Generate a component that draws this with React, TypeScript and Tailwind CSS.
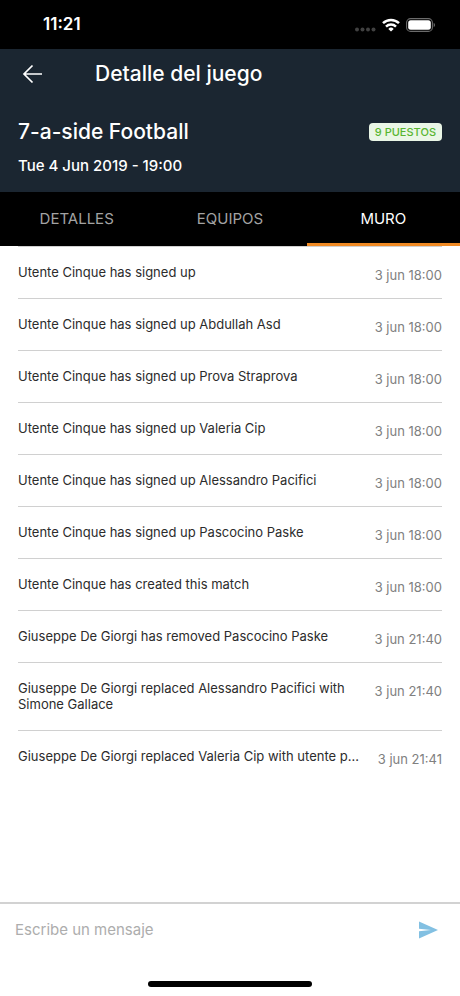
import { useState } from "react";

const TABS = ["DETALLES", "EQUIPOS", "MURO"] as const;

type Tab = (typeof TABS)[number];

const ENTRIES = [
  { text: "Utente Cinque has signed up", date: "3 jun 18:00" },
  { text: "Utente Cinque has signed up Abdullah Asd", date: "3 jun 18:00" },
  { text: "Utente Cinque has signed up Prova Straprova", date: "3 jun 18:00" },
  { text: "Utente Cinque has signed up Valeria Cip", date: "3 jun 18:00" },
  { text: "Utente Cinque has signed up Alessandro Pacifici", date: "3 jun 18:00" },
  { text: "Utente Cinque has signed up Pascocino Paske", date: "3 jun 18:00" },
  { text: "Utente Cinque has created this match", date: "3 jun 18:00" },
  { text: "Giuseppe De Giorgi has removed Pascocino Paske", date: "3 jun 21:40" },
  {
    text: "Giuseppe De Giorgi replaced Alessandro Pacifici with Simone Gallace",
    date: "3 jun 21:40",
  },
  {
    text: "Giuseppe De Giorgi replaced Valeria Cip with utente p...",
    date: "3 jun 21:41",
  },
];

export default function App() {
  const [tab, setTab] = useState<Tab>("MURO");
  const [message, setMessage] = useState("");

  return (
    <div className="flex min-h-screen flex-col bg-white font-['Inter',sans-serif]">
      <StatusBar />

      <header className="bg-[#1b2631] text-white">
        <div className="flex h-[50px] items-center px-5">
          <button aria-label="Volver" className="w-[75px]">
            <svg width="24" height="24" viewBox="0 0 24 24" fill="none" stroke="currentColor" strokeWidth="1.7">
              <path d="M22 12H4M12.5 3.5L4 12l8.500 8.500" />
            </svg>
          </button>
          <h1 className="text-[21px] leading-7 font-medium">Detalle del juego</h1>
        </div>

        <div className="px-[18px] pt-[19px] pb-[14px]">
          <div className="flex items-center justify-between">
            <h2 className="text-[21px] leading-7 font-medium">7-a-side Football</h2>
            <span className="rounded bg-[#eaf6e6] px-1.5 text-[11px] leading-[18px] font-medium text-[#58b530]">
              9 PUESTOS
            </span>
          </div>
          <p className="mt-2 text-[15px] leading-6 font-medium">Tue 4 Jun 2019 - 19:00</p>
        </div>
      </header>

      <nav className="grid grid-cols-3 bg-black">
        {TABS.map((name) => (
          <TabButton key={name} label={name} active={name === tab} onClick={() => setTab(name)} />
        ))}
      </nav>

      <main className="flex-1 px-[18px]">
        <ul className="divide-y divide-[#d0d0d0] border-t border-[#d0d0d0]">
          {ENTRIES.map((entry) => (
            <li key={entry.text} className="flex items-start gap-2 pt-[17px] pb-[18px]">
              <p className="min-w-0 flex-1 text-[13px] leading-4 text-[#2c2c2c]">{entry.text}</p>
              <time className="mt-[3px] h-[13px] shrink-0 text-[13px] leading-4 text-[#808080]">
                {entry.date}
              </time>
            </li>
          ))}
        </ul>
      </main>

      <footer className="border-t-2 border-[#d2d2d2]">
        <form className="flex h-[52px] items-center pr-[21px] pl-[15px]" onSubmit={(e) => e.preventDefault()}>
          <input
            aria-label="Mensaje"
            placeholder="Escribe un mensaje"
            value={message}
            onChange={(e) => setMessage(e.target.value)}
            className="min-w-0 flex-1 text-[15px] outline-none placeholder:text-[#adadad]"
          />
          <button aria-label="Enviar">
            <svg width="20" height="18" viewBox="0 0 20 18" fill="#82c0e2">
              <path d="M0 0.500L19 9 0 17.500V10.300L12 9 0 7.700z" />
            </svg>
          </button>
        </form>
        <div className="flex h-10 items-end justify-center pb-[9px]">
          <div className="h-1.5 w-[164px] rounded-full bg-black" />
        </div>
      </footer>
    </div>
  );
}

function StatusBar() {
  return (
    <div className="flex h-[49px] items-center justify-between bg-black pt-px pr-6 pl-[43px] text-white">
      <span className="text-[17px] font-semibold">11:21</span>
      <div className="flex items-center gap-1.5">
        <svg width="21" height="16" viewBox="0 0 21 16" fill="#414141">
          <circle cx="2" cy="12.500" r="2" />
          <circle cx="7.500" cy="12.500" r="2" />
          <circle cx="13" cy="12.500" r="2" />
          <circle cx="18.500" cy="12.500" r="2" />
        </svg>
        <svg width="18" height="14" viewBox="0 0 18 14" fill="none" stroke="currentColor" strokeWidth="2.500">
          <path d="M1 5.200a11.500 11.500 0 0 1 16 0" />
          <path d="M4 8.600a7.200 7.200 0 0 1 10 0" />
          <path d="M9 13.500L6.300 10.900a3.900 3.900 0 0 1 5.400 0z" fill="currentColor" stroke="none" />
        </svg>
        <svg width="30" height="14" viewBox="0 0 30 14">
          <rect x="0.600" y="0.600" width="25.800" height="12.800" rx="4" fill="none" stroke="#6b6b6b" strokeWidth="1.100" />
          <rect x="2.200" y="2.200" width="22.600" height="9.600" rx="2.500" fill="currentColor" />
          <path d="M27.700 4.800c1.800 0.700 1.800 3.700 0 4.400z" fill="#6b6b6b" />
        </svg>
      </div>
    </div>
  );
}

interface TabButtonProps {
  label: string;
  active: boolean;
  onClick(): void;
}

function TabButton({ label, active, onClick }: TabButtonProps) {
  return (
    <button
      onClick={onClick}
      className={[
        "h-[54px] border-b-3 pt-1 text-[15px]",
        active ? "border-[#f08a24] text-white" : "border-transparent text-[#a3a3a3]",
      ].join(" ")}
    >
      {label}
    </button>
  );
}
